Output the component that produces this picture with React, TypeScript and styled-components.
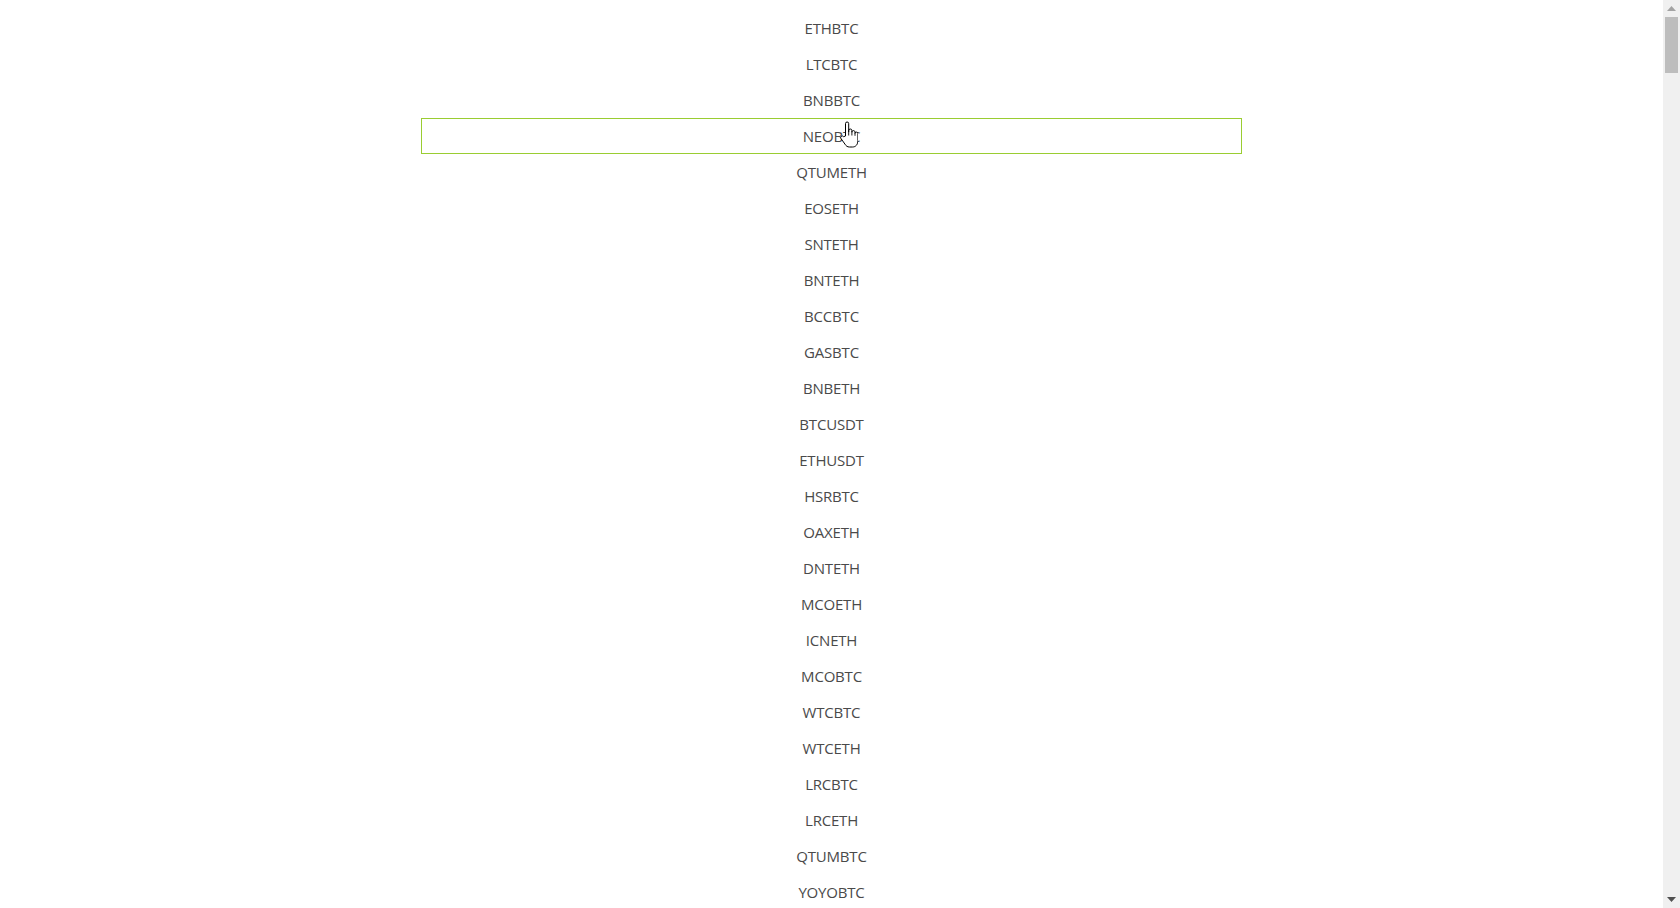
import React from "react";
import styled, { createGlobalStyle } from "styled-components";

const GlobalStyle = createGlobalStyle`
  html, body {
    margin: 0;
    padding: 0;
    background: #ffffff;
    overflow: hidden;
  }
  body {
    font-family: "Open Sans", "Noto Sans", "Liberation Sans", sans-serif;
  }
`;

const bases = [
  "OMG","ZRX","STRAT","SNGLS","BQX","KNC","FUN","SNM","NEO","IOTA","LINK","XVG","CTR","SALT","MDA","MTL","SUB","EOS","SNT","ETC","MTH","ENG","DNT","ZEC","AST","DASH","BTG","EVX","REQ","VIB","TRX","POWR","ARK","XRP","MOD","ENJ","STORJ","VEN","KMD","RCN","NULS","RDN","XMR","DLT","AMB","BAT","BCPT","ARN","GVT","CDT","GXS","POE","QSP","BTS","XZC","LSK","TNT","FUEL","MANA","BCD","DGD","ADX","ADA","PPT","CMT","XLM","CND","LEND","WABI","TNB","WAVES","GTO","ICX","OST","ELF","AION","NEBL","BRD","EDO","WINGS","NAV","LUN","TRIG","APPC","VIBE","RLC","INS","PIVX","IOST","CHAT","STEEM","NANO","VIA","BLZ","AE","RPX","NCASH","POA","ZIL","ONT","STORM","XEM","WAN","WPR","QLC","SYS","GRS","CLOAK","GNT","LOOM","BCN","REP","TUSD","ZEN","SKY","CVC","THETA","IOTX","QKC","AGI","NXS","DATA","SC","NPXS","KEY","NAS","MFT","DENT","ARDR","HOT","VET","DOCK","POLY","PHX","HC","GO","PAX","RVN","DCR","MITH","BCHABC","BCHSV","REN","BTT","ONG","FET","CELR","MATIC","ATOM"
];
const quotes = ["BTC", "ETH", "BNB"];

const firstPairs = [
  "ETHBTC","LTCBTC","BNBBTC","NEOBTC","QTUMETH","EOSETH","SNTETH","BNTETH","BCCBTC","GASBTC",
  "BNBETH","BTCUSDT","ETHUSDT","HSRBTC","OAXETH","DNTETH","MCOETH","ICNETH","MCOBTC","WTCBTC",
  "WTCETH","LRCBTC","LRCETH","QTUMBTC","YOYOBTC"
];

const pairs: string[] = [...firstPairs];
for (const b of bases) {
  for (const q of quotes) {
    const p = b + q;
    if (!pairs.includes(p) && pairs.length < 390) pairs.push(p);
  }
}

const Window = styled.div`
  display: flex;
  height: 100vh;
  overflow: hidden;
`;

const Viewport = styled.main`
  flex: 1;
  min-width: 0;
  overflow-y: auto;
  scrollbar-width: none;
  &::-webkit-scrollbar {
    display: none;
  }
`;

const List = styled.ul`
  list-style: none;
  margin: 0 auto;
  padding: 10px 0;
  width: 821px;
`;

const Item = styled.li<{ $hover?: boolean }>`
  position: relative;
  height: 36px;
  box-sizing: border-box;
  display: flex;
  align-items: center;
  justify-content: center;
  border: 1px solid ${(p) => (p.$hover ? "#9acd32" : "transparent")};
  color: #4a4a4a;
  font-size: 15px;
  letter-spacing: -0.2px;
`;

const Cursor = styled.svg`
  position: absolute;
  left: 418px;
  top: 2px;
  width: 18px;
  height: 27px;
  pointer-events: none;
`;

const ScrollBar = styled.div`
  width: 17px;
  flex: none;
  background: #f0f0f0;
  display: flex;
  flex-direction: column;
`;

const ScrollButton = styled.div`
  height: 17px;
  flex: none;
  display: flex;
  align-items: center;
  justify-content: center;
`;

const Track = styled.div`
  flex: 1;
  display: flex;
  flex-direction: column;
  align-items: center;
`;

const Thumb = styled.div`
  width: 13px;
  height: 56px;
  background: #bdbdbd;
`;

const Arrow = ({ dir, color }: { dir: "up" | "down"; color: string }) => (
  <svg width="9" height="5" viewBox="0 0 9 5">
    <path d={dir === "up" ? "M0 5 L4.5 0 L9 5 Z" : "M0 0 L4.5 5 L9 0 Z"} fill={color} />
  </svg>
);

const HandCursor = () => (
  <Cursor viewBox="0 0 18 27">
    <path
      d="M5.5 15 V2.6 a1.6 1.6 0 0 1 3.2 0 V11 V9.6 a1.6 1.6 0 0 1 3.2 0 V11.4 V10.8 a1.6 1.6 0 0 1 3.1 0 V12.6 V12.2 a1.5 1.5 0 0 1 2.9 0 V19.5 c0 4 -2.2 6.5 -5.3 6.5 h-3.2 c-2 0 -3.3 -1 -4.4 -2.8 L1 17.6 a1.6 1.6 0 0 1 2.6 -1.9 Z"
      fill="#ffffff"
      stroke="#000000"
      strokeWidth="1"
      strokeLinejoin="round"
    />
    <path d="M8.7 11 V14.5 M11.9 11.4 V14.5 M15 12.6 V14.8" stroke="#000" strokeWidth="0.9" fill="none" />
  </Cursor>
);

export default function App() {
  return (
    <Window>
      <GlobalStyle />
      <Viewport>
        <List>
          {pairs.map((p, i) => (
            <Item key={p + i} $hover={i === 3}>
              {p}
              {i === 3 && <HandCursor />}
            </Item>
          ))}
        </List>
      </Viewport>
      <ScrollBar>
        <ScrollButton>
          <Arrow dir="up" color="#a3a3a3" />
        </ScrollButton>
        <Track>
          <Thumb />
        </Track>
        <ScrollButton>
          <Arrow dir="down" color="#505050" />
        </ScrollButton>
      </ScrollBar>
    </Window>
  );
}
